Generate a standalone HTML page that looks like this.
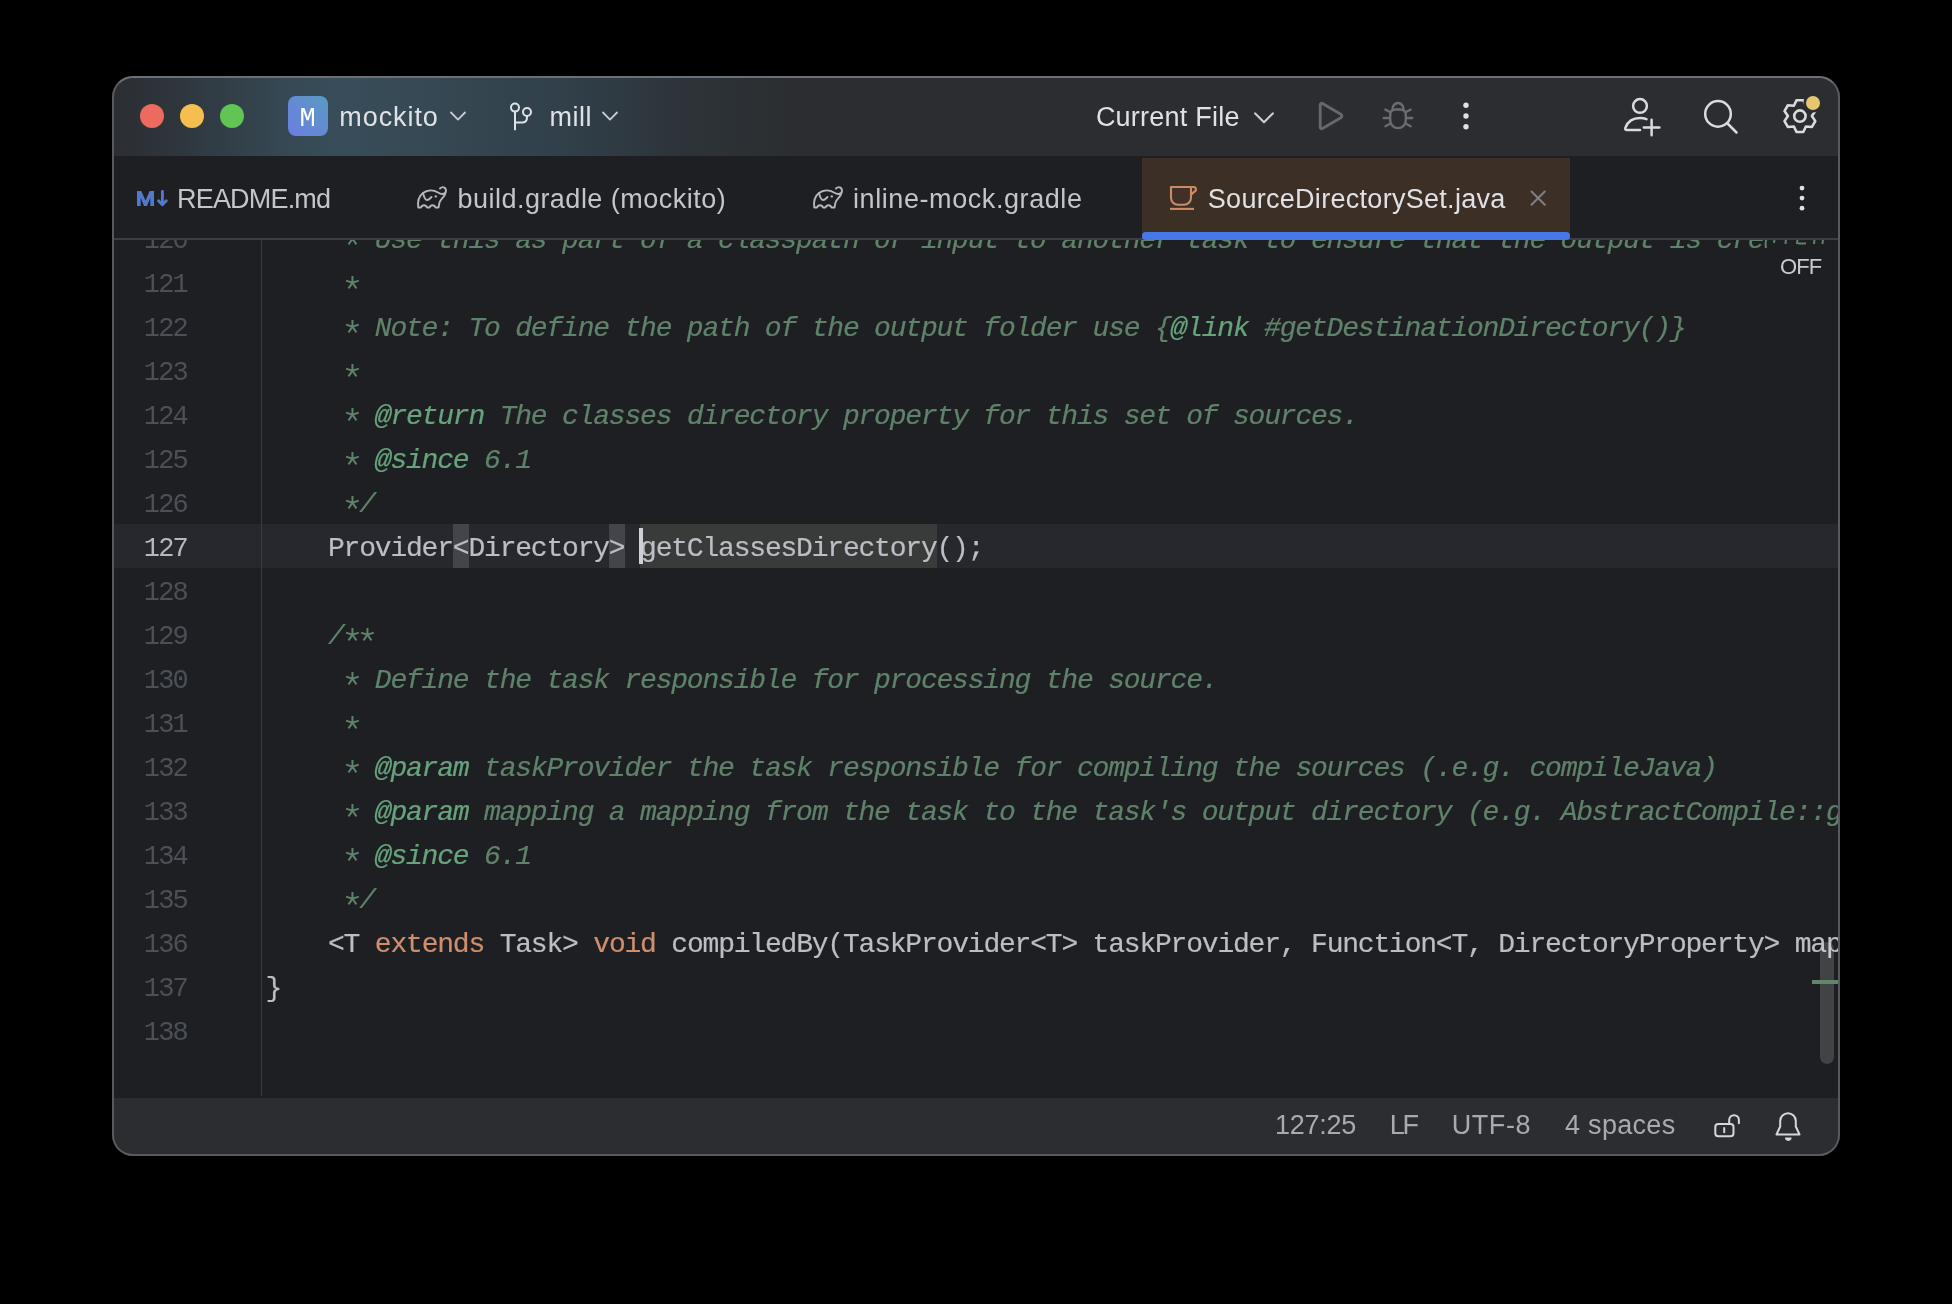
<!DOCTYPE html>
<html><head><meta charset="utf-8">
<style>
html,body{margin:0;padding:0;background:#000;width:1952px;height:1304px;overflow:hidden;}
.clip{position:absolute;left:112px;top:76px;width:1728px;height:1080px;border-radius:21px;overflow:hidden;}
.inner{position:absolute;left:-112px;top:-76px;width:1952px;height:1304px;will-change:transform;}
.frame{position:absolute;left:112px;top:76px;width:1728px;height:1080px;border-radius:21px;box-sizing:border-box;border:2px solid #58595d;border-top-color:#6c6f73;pointer-events:none;}
.abs{position:absolute;}
.ui{font-family:"Liberation Sans",sans-serif;white-space:pre;}
.mono{font-family:"Liberation Mono",monospace;white-space:pre;}
#title{left:0;top:0;width:1952px;height:156px;background:#2b2d30;}
#tabs{left:0;top:156px;width:1952px;height:82px;background:#1e1f22;}
#tabline{left:0;top:238px;width:1952px;height:1.8px;background:#3c3e43;z-index:1;}
#editor{left:0;top:239px;width:1952px;height:859px;background:#1e1f22;overflow:hidden;}
#status{left:0;top:1098px;width:1952px;height:58px;background:#2b2d30;}
.code{position:absolute;left:265.6px;font-size:28px;letter-spacing:-1.2px;margin-top:3px;-webkit-text-stroke:0.2px currentColor;line-height:44px;height:44px;color:#bcbec4;}
.ln{position:absolute;left:99px;width:88px;text-align:right;font-size:27px;letter-spacing:-1.8px;margin-top:3px;line-height:44px;height:44px;color:#4b5058;}
.c{color:#5f826b;font-style:italic;}
.t{color:#67a37c;font-style:italic;}
.k{color:#cf8e6d;}
.ast{display:inline-block;vertical-align:top;}
.cur{color:#b4b8bf;}
</style></head>
<body>
<div class="clip"><div class="inner">
  <div id="title" class="abs"></div>
  <div class="abs" style="left:0;top:0;width:1952px;height:156px;background:linear-gradient(90deg, #2b2e33 113px, #2e353b 170px, #364954 290px, #384d5a 340px, #364853 430px, #31404a 560px, #2d3439 680px, #2b2d30 800px)"></div>
  <svg class="abs" style="left:0;top:0" width="1952" height="260" viewBox="0 0 1952 260">
    <circle cx="152" cy="116" r="12" fill="#ed6a5e"/>
    <circle cx="192" cy="116" r="12" fill="#f5bf4f"/>
    <circle cx="232" cy="116" r="12" fill="#61c554"/>
    <defs><linearGradient id="pg" x1="0" y1="1" x2="1" y2="0"><stop offset="0" stop-color="#6b7de2"/><stop offset="1" stop-color="#5a9ac2"/></linearGradient></defs>
    <rect x="288" y="96" width="40" height="40" rx="8" fill="url(#pg)"/>
    <path d="M451,112.5 L458,119.6 L465,112.5" fill="none" stroke="#c9cbd0" stroke-width="1.8" stroke-linecap="round" stroke-linejoin="round"/>
    <g fill="none" stroke="#dfe1e5" stroke-width="2" stroke-linecap="round">
      <circle cx="515" cy="107.6" r="4"/>
      <circle cx="527" cy="112" r="4"/>
      <path d="M515,111.6 V129.5 M527,116 V117.5 Q527,122.5 522,122.5 H515.5"/>
    </g>
    <path d="M603,112.5 L610,119.6 L617,112.5" fill="none" stroke="#c9cbd0" stroke-width="1.8" stroke-linecap="round" stroke-linejoin="round"/>
    <path d="M1255.2,113.4 L1264,122.3 L1272.8,113.4" fill="none" stroke="#c9cbd0" stroke-width="2.2" stroke-linecap="round" stroke-linejoin="round"/>
    <path d="M1320.2,105.5 Q1320.2,102.2 1323.3,103.9 L1340.5,114 Q1343.3,116 1340.5,118 L1323.3,128.1 Q1320.2,129.8 1320.2,126.5 Z" fill="none" stroke="#67686c" stroke-width="2.9" stroke-linejoin="round"/>
    <g fill="none" stroke="#6a6c70" stroke-width="2.4" stroke-linecap="round" stroke-linejoin="round">
      <path d="M1390.2,115 Q1390.2,109.5 1396,109.5 H1400 Q1405.8,109.5 1405.8,115 V120.3 A7.8,7.8 0 0 1 1390.2,120.3 Z"/>
      <path d="M1392.4,109.5 A5.6,6.6 0 0 1 1403.6,109.5"/>
      <path d="M1383.8,118 H1389.5 M1406.5,118 H1412.2 M1385.4,109.6 L1390,112 M1410.6,109.6 L1406,112 M1385.4,126.3 L1390,123.8 M1410.6,126.3 L1406,123.8"/>
    </g>
    <circle cx="1466" cy="105.3" r="2.7" fill="#dfe1e5"/>
    <circle cx="1466" cy="116" r="2.7" fill="#dfe1e5"/>
    <circle cx="1466" cy="126.8" r="2.7" fill="#dfe1e5"/>
    <g fill="none" stroke="#d9dbdf" stroke-width="2.5" stroke-linecap="round">
      <circle cx="1640" cy="105.9" r="6.9"/>
      <path d="M1640,130 H1627 Q1624.5,130 1625.5,127.5 C1628,121 1634,118 1640,118 C1642.5,118 1644.5,118.4 1646.5,119.2"/>
      <path d="M1643.8,127.4 H1659.4 M1651.6,119.8 V135.2"/>
      <circle cx="1718" cy="113.9" r="12.8" stroke-width="2.5"/>
      <path d="M1727.5,123.5 L1736.5,132.5" stroke-width="2.5"/>
    </g>
  <defs><mask id="gm"><rect x="1770" y="80" width="70" height="70" fill="#fff"/><circle cx="1813" cy="103" r="9.6" fill="#000"/></mask></defs>
    <g mask="url(#gm)" fill="none" stroke="#d9dbdf" stroke-width="2.6" stroke-linejoin="round">
      <path d="M1796.53,100.25 L1803.27,100.25 L1805.90,105.71 L1811.94,105.26 L1815.31,111.09 L1811.90,116.10 L1815.31,121.11 L1811.94,126.94 L1805.90,126.49 L1803.27,131.95 L1796.53,131.95 L1793.90,126.49 L1787.86,126.94 L1784.49,121.11 L1787.90,116.10 L1784.49,111.09 L1787.86,105.26 L1793.90,105.71 Z"/>
      <circle cx="1799.9" cy="116.1" r="5.7"/>
    </g>
    <circle cx="1813" cy="103" r="7" fill="#e6c66e"/>
  </svg>
  <div id="tabs" class="abs"></div>
  <div class="abs" style="left:1142px;top:158px;width:428px;height:81px;background:#3c3026"></div>
  <div class="abs" style="left:1142px;top:232px;width:428px;height:7.5px;border-radius:3.75px;background:#4877e8;z-index:2"></div>
  <svg class="abs" style="left:0;top:0" width="1952" height="260" viewBox="0 0 1952 260">
    <path d="M137,191 H141.3 L145.5,200.5 L149.7,191 H154 V206 H150.3 V197.8 L147,206 H144 L140.7,197.8 V206 H137 Z" fill="#5479cc"/>
    <path d="M162.4,191.5 V204.5 M158.5,200.8 L162.4,204.7 L166.3,200.8" fill="none" stroke="#5479cc" stroke-width="2.9" stroke-linecap="round" stroke-linejoin="round"/>
    <g id="gradle" fill="none" stroke="#b4b6ba" stroke-width="1.9" stroke-linecap="round" stroke-linejoin="round">
      <path d="M440,188.5 C443,185.5 446.8,188 445.8,192 C445,197 440.5,199 439.5,202.5 L438.5,207.5 H435.5 C434.5,204.5 430.5,204.5 429.5,207.5 H427 C426,204.5 422,204.5 421,207.5 H418.3 C417.3,200.5 419,196 423,193 C427,190 433,189.5 438,192.5 C441,194.5 444.5,194.5 445.8,192"/>
      <path d="M423,193 C424,197 425,200 427,200 C429,200 430,198.5 431.5,197"/>
      <circle cx="435.8" cy="196.4" r="1.2" fill="#b4b6ba" stroke="none"/>
    </g>
    <use href="#gradle" x="396" y="0"/>
    <g fill="none" stroke="#cc8b63" stroke-width="2.1" stroke-linejoin="round">
      <path d="M1171,187 H1191 V197.8 A7,7 0 0 1 1184,204.8 H1178 A7,7 0 0 1 1171,197.8 Z" fill="#41302a"/>
      <path d="M1191,187 H1193.5 A2.4,2.4 0 0 1 1195.9,189.4 V190.4 L1191,194.6"/>
      <path d="M1170,208.9 H1194"/>
    </g>
    <path d="M1531.5,191.5 L1544.8,204.8 M1544.8,191.5 L1531.5,204.8" stroke="#7e8085" stroke-width="2" stroke-linecap="round"/>
    <circle cx="1802" cy="188.1" r="2.4" fill="#dfe1e5"/>
    <circle cx="1802" cy="198.1" r="2.4" fill="#dfe1e5"/>
    <circle cx="1802" cy="208.2" r="2.4" fill="#dfe1e5"/>
  </svg>
  <div id="tabline" class="abs"></div>
  <div id="editor" class="abs">
  <div class="abs" style="left:0;top:285px;width:1952px;height:44px;background:#26282e"></div>
  <div class="abs" style="left:453px;top:285px;width:16px;height:44px;background:#43454a"></div>
  <div class="abs" style="left:609px;top:285px;width:16px;height:44px;background:#43454a"></div>
  <div class="abs" style="left:640px;top:285px;width:297px;height:44px;background:#393b3b"></div>
  <div class="abs" style="left:261px;top:0;width:1px;height:857px;background:#393b40"></div>
  <div class="ln mono" style="top:-23px">120</div>
  <div class="code mono" style="top:-23px">     <span class="c"><svg class="ast" width="15.6" height="44" viewBox="0 0 15.6 44"><path d="M8.46,13 V19.76 M2.1,17.6 L8.46,19.76 L14.8,17.6 M4.5,25.4 L8.46,19.76 L12.4,25.4" fill="none" stroke="#5f826b" stroke-width="2"/></svg> Use this as part of a classpath or input to another task to ensure that the output is cre</span></div>
  <div class="ln mono" style="top:21px">121</div>
  <div class="code mono" style="top:21px">     <span class="c"><svg class="ast" width="15.6" height="44" viewBox="0 0 15.6 44"><path d="M8.46,13 V19.76 M2.1,17.6 L8.46,19.76 L14.8,17.6 M4.5,25.4 L8.46,19.76 L12.4,25.4" fill="none" stroke="#5f826b" stroke-width="2"/></svg></span></div>
  <div class="ln mono" style="top:65px">122</div>
  <div class="code mono" style="top:65px">     <span class="c"><svg class="ast" width="15.6" height="44" viewBox="0 0 15.6 44"><path d="M8.46,13 V19.76 M2.1,17.6 L8.46,19.76 L14.8,17.6 M4.5,25.4 L8.46,19.76 L12.4,25.4" fill="none" stroke="#5f826b" stroke-width="2"/></svg> Note: To define the path of the output folder use {</span><span class="t">@link</span><span class="c"> #getDestinationDirectory()}</span></div>
  <div class="ln mono" style="top:109px">123</div>
  <div class="code mono" style="top:109px">     <span class="c"><svg class="ast" width="15.6" height="44" viewBox="0 0 15.6 44"><path d="M8.46,13 V19.76 M2.1,17.6 L8.46,19.76 L14.8,17.6 M4.5,25.4 L8.46,19.76 L12.4,25.4" fill="none" stroke="#5f826b" stroke-width="2"/></svg></span></div>
  <div class="ln mono" style="top:153px">124</div>
  <div class="code mono" style="top:153px">     <span class="c"><svg class="ast" width="15.6" height="44" viewBox="0 0 15.6 44"><path d="M8.46,13 V19.76 M2.1,17.6 L8.46,19.76 L14.8,17.6 M4.5,25.4 L8.46,19.76 L12.4,25.4" fill="none" stroke="#5f826b" stroke-width="2"/></svg> </span><span class="t">@return</span><span class="c"> The classes directory property for this set of sources.</span></div>
  <div class="ln mono" style="top:197px">125</div>
  <div class="code mono" style="top:197px">     <span class="c"><svg class="ast" width="15.6" height="44" viewBox="0 0 15.6 44"><path d="M8.46,13 V19.76 M2.1,17.6 L8.46,19.76 L14.8,17.6 M4.5,25.4 L8.46,19.76 L12.4,25.4" fill="none" stroke="#5f826b" stroke-width="2"/></svg> </span><span class="t">@since</span><span class="c"> 6.1</span></div>
  <div class="ln mono" style="top:241px">126</div>
  <div class="code mono" style="top:241px">     <span class="c"><svg class="ast" width="15.6" height="44" viewBox="0 0 15.6 44"><path d="M8.46,13 V19.76 M2.1,17.6 L8.46,19.76 L14.8,17.6 M4.5,25.4 L8.46,19.76 L12.4,25.4" fill="none" stroke="#5f826b" stroke-width="2"/></svg>/</span></div>
  <div class="ln mono cur" style="top:285px">127</div>
  <div class="code mono" style="top:285px">    Provider&lt;Directory&gt; getClassesDirectory();</div>
  <div class="ln mono" style="top:329px">128</div>
  <div class="ln mono" style="top:373px">129</div>
  <div class="code mono" style="top:373px">    <span class="c">/<svg class="ast" width="15.6" height="44" viewBox="0 0 15.6 44"><path d="M8.46,13 V19.76 M2.1,17.6 L8.46,19.76 L14.8,17.6 M4.5,25.4 L8.46,19.76 L12.4,25.4" fill="none" stroke="#5f826b" stroke-width="2"/></svg><svg class="ast" width="15.6" height="44" viewBox="0 0 15.6 44"><path d="M8.46,13 V19.76 M2.1,17.6 L8.46,19.76 L14.8,17.6 M4.5,25.4 L8.46,19.76 L12.4,25.4" fill="none" stroke="#5f826b" stroke-width="2"/></svg></span></div>
  <div class="ln mono" style="top:417px">130</div>
  <div class="code mono" style="top:417px">     <span class="c"><svg class="ast" width="15.6" height="44" viewBox="0 0 15.6 44"><path d="M8.46,13 V19.76 M2.1,17.6 L8.46,19.76 L14.8,17.6 M4.5,25.4 L8.46,19.76 L12.4,25.4" fill="none" stroke="#5f826b" stroke-width="2"/></svg> Define the task responsible for processing the source.</span></div>
  <div class="ln mono" style="top:461px">131</div>
  <div class="code mono" style="top:461px">     <span class="c"><svg class="ast" width="15.6" height="44" viewBox="0 0 15.6 44"><path d="M8.46,13 V19.76 M2.1,17.6 L8.46,19.76 L14.8,17.6 M4.5,25.4 L8.46,19.76 L12.4,25.4" fill="none" stroke="#5f826b" stroke-width="2"/></svg></span></div>
  <div class="ln mono" style="top:505px">132</div>
  <div class="code mono" style="top:505px">     <span class="c"><svg class="ast" width="15.6" height="44" viewBox="0 0 15.6 44"><path d="M8.46,13 V19.76 M2.1,17.6 L8.46,19.76 L14.8,17.6 M4.5,25.4 L8.46,19.76 L12.4,25.4" fill="none" stroke="#5f826b" stroke-width="2"/></svg> </span><span class="t">@param</span><span class="c"> taskProvider the task responsible for compiling the sources (.e.g. compileJava)</span></div>
  <div class="ln mono" style="top:549px">133</div>
  <div class="code mono" style="top:549px">     <span class="c"><svg class="ast" width="15.6" height="44" viewBox="0 0 15.6 44"><path d="M8.46,13 V19.76 M2.1,17.6 L8.46,19.76 L14.8,17.6 M4.5,25.4 L8.46,19.76 L12.4,25.4" fill="none" stroke="#5f826b" stroke-width="2"/></svg> </span><span class="t">@param</span><span class="c"> mapping a mapping from the task to the task's output directory (e.g. AbstractCompile::getDestinationDirectory)</span></div>
  <div class="ln mono" style="top:593px">134</div>
  <div class="code mono" style="top:593px">     <span class="c"><svg class="ast" width="15.6" height="44" viewBox="0 0 15.6 44"><path d="M8.46,13 V19.76 M2.1,17.6 L8.46,19.76 L14.8,17.6 M4.5,25.4 L8.46,19.76 L12.4,25.4" fill="none" stroke="#5f826b" stroke-width="2"/></svg> </span><span class="t">@since</span><span class="c"> 6.1</span></div>
  <div class="ln mono" style="top:637px">135</div>
  <div class="code mono" style="top:637px">     <span class="c"><svg class="ast" width="15.6" height="44" viewBox="0 0 15.6 44"><path d="M8.46,13 V19.76 M2.1,17.6 L8.46,19.76 L14.8,17.6 M4.5,25.4 L8.46,19.76 L12.4,25.4" fill="none" stroke="#5f826b" stroke-width="2"/></svg>/</span></div>
  <div class="ln mono" style="top:681px">136</div>
  <div class="code mono" style="top:681px">    &lt;T <span class="k">extends</span> Task&gt; <span class="k">void</span> compiledBy(TaskProvider&lt;T&gt; taskProvider, Function&lt;T, DirectoryProperty&gt; mapping);</div>
  <div class="ln mono" style="top:725px">137</div>
  <div class="code mono" style="top:725px">}</div>
  <div class="ln mono" style="top:769px">138</div>
  <div class="abs" style="left:1820px;top:703px;width:14px;height:122px;border-radius:7px;background:rgba(255,255,255,0.16)"></div>
  <div class="abs" style="left:1812px;top:741px;width:27px;height:4px;background:#628570"></div>
  <svg class="abs" style="left:1750px;top:0" width="88" height="12" viewBox="1750 239 88 12" fill="none" stroke="#5f826b" stroke-width="2" stroke-linecap="butt">
    <path d="M1766.5,239 Q1765,243 1766,248"/>
    <path d="M1774.5,239 L1774,243"/>
    <path d="M1786,239 L1785.5,244"/>
    <path d="M1797.5,239 L1797,244 M1798,243.5 H1806"/>
    <path d="M1814.5,239 L1814,244"/>
    <path d="M1823,239 L1822.5,244"/>
  </svg>
  <div class="abs" style="left:639px;top:289px;width:4px;height:36px;background:#ced0d6"></div>
</div>
  <div id="status" class="abs"></div>
  <svg class="abs" style="left:0;top:1098px" width="1952" height="58" viewBox="0 1098 1952 58">
    <g fill="none" stroke="#d5d7db" stroke-width="2" stroke-linecap="round" stroke-linejoin="round">
      <rect x="1715.3" y="1124" width="18.2" height="12.3" rx="3"/>
      <path d="M1724.2,1128 V1132.3"/>
      <path d="M1729.2,1123.5 V1120 A4.85,4.85 0 0 1 1738.9,1120 V1123.3"/>
      <path d="M1776.5,1134.5 H1799.5 L1795.8,1126.5 V1121 A7.8,7.8 0 0 0 1780.2,1121 V1126.5 Z"/>
    </g>
    <path d="M1785,1137.6 H1791.6 A3.3,3.3 0 0 1 1785,1137.6 Z" fill="#d5d7db"/>
  </svg>
  <svg class="abs" style="left:0;top:0" width="1952" height="1304" viewBox="0 0 1952 1304" font-family="Liberation Sans" font-size="27">
    <text x="299.5" y="126" font-family="Liberation Mono" font-size="27" fill="#ffffff">M</text>
    <text x="339.3" y="126" fill="#dfe1e5" letter-spacing="0.92">mockito</text>
    <text x="549.6" y="126" fill="#dfe1e5" letter-spacing="0.47">mill</text>
    <text x="1095.9" y="126" fill="#dfe1e5" letter-spacing="0.23">Current File</text>
    <text x="177" y="208" fill="#c3c5c9" letter-spacing="-0.81">README.md</text>
    <text x="457.4" y="208" fill="#c3c5c9" letter-spacing="0.49">build.gradle (mockito)</text>
    <text x="853" y="208" fill="#c3c5c9" letter-spacing="0.58">inline-mock.gradle</text>
    <text x="1207.8" y="208" fill="#dfe1e5" letter-spacing="0.29">SourceDirectorySet.java</text>
    <text x="1779.9" y="273.7" font-size="22" fill="#c8cacf" letter-spacing="-0.8">OFF</text>
    <text x="1274.9" y="1134" fill="#a8aaae" letter-spacing="-0.22">127:25</text>
    <text x="1389.7" y="1134" fill="#a8aaae" letter-spacing="-2.2">LF</text>
    <text x="1451.7" y="1134" fill="#a8aaae" letter-spacing="0.57">UTF-8</text>
    <text x="1565" y="1134" fill="#a8aaae" letter-spacing="0.3">4 spaces</text>
  </svg>
</div></div>
<div class="frame"></div>
</body></html>
